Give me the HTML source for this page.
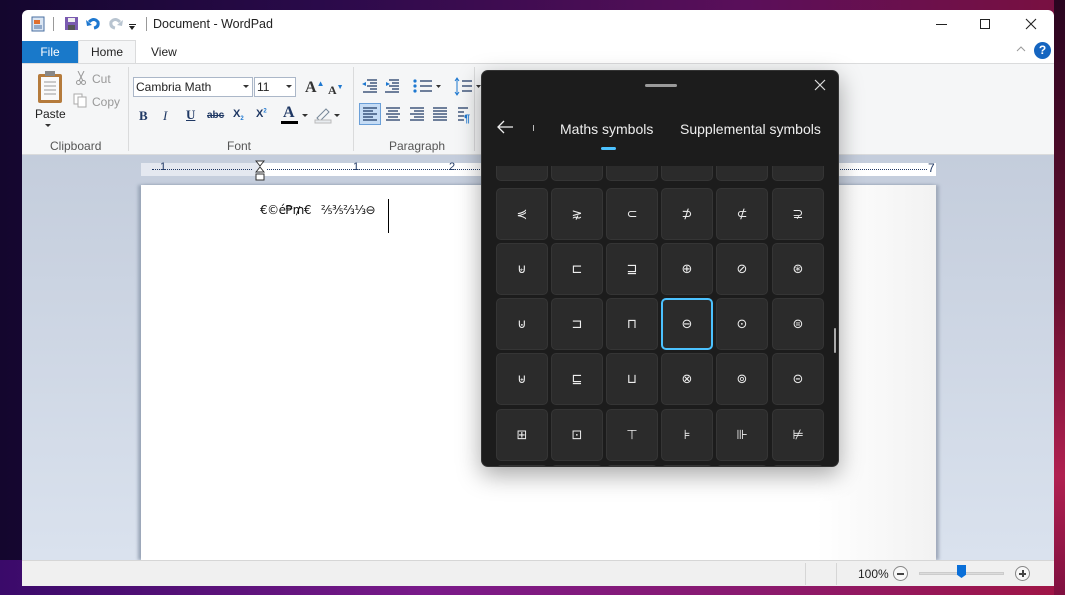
<!DOCTYPE html>
<html><head><meta charset="utf-8"><style>
*{margin:0;padding:0;box-sizing:border-box}
body{width:1065px;height:595px;overflow:hidden;position:relative;font-family:"Liberation Sans","DejaVu Sans",sans-serif;background:linear-gradient(90deg,#14062e 0%,#2a0a4a 30%,#5a0f5a 70%,#7a1040 100%)}
.bg2{position:absolute;left:0;top:560px;width:1065px;height:35px;background:linear-gradient(90deg,#3a0a6a,#7a1a8a 40%,#8a1a70 70%,#a01545)}
.bg3{position:absolute;left:1054px;top:0;width:11px;height:595px;background:linear-gradient(180deg,#2a0520,#6a1030 50%,#b02050 80%,#801040)}
.win{position:absolute;left:22px;top:10px;width:1032px;height:576px;background:#fff;overflow:hidden;border-radius:6px 6px 0 0}
.a{position:absolute}
.t{position:absolute;font-size:12px;color:#222;white-space:nowrap}
.doc{position:absolute;left:0;top:145px;width:1032px;height:405px;background:linear-gradient(180deg,#c4cddc,#dae2ee)}
.cell{position:absolute;width:52px;height:52px;background:#2b2b2b;border:1px solid #353535;border-radius:5px;color:#eee;font-family:"DejaVu Sans",sans-serif;font-size:13px;display:flex;align-items:center;justify-content:center}
</style></head><body>
<div class="bg2"></div><div class="bg3"></div>
<div class="win">
 <!-- title bar -->
 <svg class="a" style="left:8px;top:6px" width="16" height="16"><rect x="2" y="1" width="12" height="14" fill="#dbe6f3" stroke="#4a6fa0"/><rect x="4" y="4" width="6" height="4" fill="#e07030"/><path d="M4 10h8M4 12h8" stroke="#4a6fa0"/></svg>
 <div class="a" style="left:31px;top:7px;width:1px;height:14px;background:#999"></div>
 <svg class="a" style="left:42px;top:6px" width="15" height="15"><rect x="1" y="1" width="13" height="13" fill="#7a5ab0"/><rect x="4" y="2" width="7" height="4" fill="#eee"/><rect x="4" y="9" width="7" height="5" fill="#555"/></svg>
 <svg class="a" style="left:64px;top:6px" width="15" height="14"><path d="M3 6 Q8 1 12 6 Q13 11 8 12" stroke="#1e78d0" stroke-width="3" fill="none"/><path d="M0 4 L6 9 L1 10Z" fill="#1e78d0"/></svg>
 <svg class="a" style="left:86px;top:6px" width="15" height="14"><path d="M12 6 Q7 1 3 6 Q2 11 7 12" stroke="#b8c4d0" stroke-width="3" fill="none"/><path d="M15 4 L9 9 L14 10Z" fill="#b8c4d0"/></svg>
 <div class="a" style="left:107px;top:14px;width:7px;height:1px;background:#222"></div><div class="a" style="left:107px;top:16px;border:3.5px solid transparent;border-top:4px solid #222"></div>
 <div class="a" style="left:124px;top:7px;width:1px;height:14px;background:#999"></div>
 <div class="t" style="left:131px;top:7px;font-size:12.5px">Document - WordPad</div>
 <div class="a" style="left:914px;top:14px;width:11px;height:1px;background:#222"></div>
 <div class="a" style="left:958px;top:9px;width:10px;height:10px;border:1px solid #222"></div>
 <svg class="a" style="left:1003px;top:8px" width="12" height="12"><path d="M1 1L11 11M11 1L1 11" stroke="#222" stroke-width="1.1"/></svg>
 <!-- tabs -->
 <div class="a" style="left:0;top:31px;width:56px;height:22px;background:#1979ca;color:#fff;font-size:12px;text-align:center;line-height:22px">File</div>
 <div class="a" style="left:56px;top:30px;width:58px;height:24px;background:#f5f6f7;border:1px solid #dadbdc;border-bottom:none;font-size:12px;text-align:center;line-height:22px;color:#222">Home</div>
 <div class="t" style="left:129px;top:35px">View</div>
 <svg class="a" style="left:994px;top:36px" width="10" height="6"><path d="M1 5L5 1L9 5" stroke="#999" fill="none"/></svg>
 <div class="a" style="left:1012px;top:32px;width:17px;height:17px;border-radius:50%;background:#1565c0;color:#fff;font-weight:bold;font-size:12px;text-align:center;line-height:17px">?</div>
 <!-- ribbon -->
 <div class="a" style="left:0;top:53px;width:1032px;height:92px;background:#f5f6f7;border-top:1px solid #dadbdc;border-bottom:1px solid #dadbdc"></div>
 <svg class="a" style="left:14px;top:60px" width="28" height="34"><rect x="2" y="4" width="24" height="29" rx="2" fill="#b57b3c"/><rect x="5" y="7" width="18" height="23" fill="#fafafa"/><path d="M8 12h12M8 16h12M8 20h12M8 24h12" stroke="#999"/><rect x="9" y="1" width="10" height="5" fill="#888"/></svg>
 <div class="t" style="left:13px;top:97px">Paste</div>
 <div class="a" style="left:23px;top:114px;border:3px solid transparent;border-top:3px solid #333"></div>
 <svg class="a" style="left:54px;top:61px" width="10" height="14"><path d="M2 0L7 10M8 0L3 10" stroke="#999"/><circle cx="2.5" cy="11.5" r="2" fill="none" stroke="#999"/><circle cx="7.5" cy="11.5" r="2" fill="none" stroke="#999"/></svg>
 <div class="t" style="left:70px;top:62px;color:#999">Cut</div>
 <svg class="a" style="left:51px;top:83px" width="14" height="15"><rect x="1" y="1" width="8" height="10" fill="#fff" stroke="#aaa"/><rect x="5" y="4" width="8" height="10" fill="#fff" stroke="#aaa"/></svg>
 <div class="t" style="left:70px;top:85px;color:#999">Copy</div>
 <div class="t" style="left:28px;top:129px;color:#555">Clipboard</div>
 <div class="a" style="left:106px;top:57px;width:1px;height:84px;background:#dadbdc"></div>
 <div class="a" style="left:111px;top:67px;width:120px;height:20px;background:#fff;border:1px solid #abb7c8"></div>
 <div class="t" style="left:114px;top:70px">Cambria Math</div>
 <div class="a" style="left:221px;top:75px;border:3px solid transparent;border-top:3px solid #333"></div>
 <div class="a" style="left:232px;top:67px;width:42px;height:20px;background:#fff;border:1px solid #abb7c8"></div>
 <div class="t" style="left:235px;top:70px">11</div>
 <div class="a" style="left:264px;top:75px;border:3px solid transparent;border-top:3px solid #333"></div>
 <div class="t" style="left:283px;top:69px;font-family:'Liberation Serif',serif;font-size:16px;font-weight:bold;color:#333">A<span style="font-size:8px;color:#1e78d0;vertical-align:top">▲</span></div>
 <div class="t" style="left:306px;top:73px;font-family:'Liberation Serif',serif;font-size:12px;font-weight:bold;color:#333">A<span style="font-size:7px;color:#1e78d0;vertical-align:top">▼</span></div>
 <div class="t" style="left:117px;top:98px;font-family:'Liberation Serif',serif;font-weight:bold;font-size:13px;color:#1f3864">B</div>
 <div class="t" style="left:141px;top:98px;font-family:'Liberation Serif',serif;font-style:italic;font-size:13px;color:#1f3864">I</div>
 <div class="t" style="left:164px;top:97px;font-family:'Liberation Serif',serif;font-weight:bold;text-decoration:underline;font-size:13px;color:#1f3864">U</div>
 <div class="t" style="left:185px;top:100px;font-size:10px;text-decoration:line-through;color:#1f3864;font-weight:bold">abc</div>
 <div class="t" style="left:211px;top:98px;font-size:11px;font-weight:bold;color:#1f3864">X<sub style="font-size:6px;color:#1e78d0">2</sub></div>
 <div class="t" style="left:234px;top:98px;font-size:11px;font-weight:bold;color:#1f3864">X<sup style="font-size:6px;color:#1e78d0">2</sup></div>
 <div class="t" style="left:261px;top:94px;font-family:'Liberation Serif',serif;font-size:16px;font-weight:bold;color:#1f3864">A</div>
 <div class="a" style="left:259px;top:111px;width:17px;height:3px;background:#000"></div>
 <div class="a" style="left:280px;top:104px;border:3px solid transparent;border-top:3px solid #333"></div>
 <svg class="a" style="left:292px;top:96px" width="18" height="18"><path d="M3 12L12 3L15 6L6 15Z" fill="none" stroke="#789"/><rect x="1" y="14" width="16" height="3" fill="#e8ecf0" stroke="#bbb"/></svg>
 <div class="a" style="left:312px;top:104px;border:3px solid transparent;border-top:3px solid #333"></div>
 <div class="t" style="left:205px;top:129px;color:#555">Font</div>
 <div class="a" style="left:331px;top:57px;width:1px;height:84px;background:#dadbdc"></div>
 <svg class="a" style="left:337px;top:66px" width="125" height="60">
  <g stroke="#1f3864" stroke-width="1.3"><path d="M8 4h10M11 7h7M8 10h10M11 13h7M4 16h14"/><path d="M30 4h10M33 7h7M30 10h10M33 13h7M26 16h14"/><path d="M61 5h12M61 10h12M61 15h12"/><path d="M103 5h10M103 10h10M103 15h10"/></g>
  <path d="M3 8l4-2v4z" fill="#1e78d0"/><path d="M31 8l-4-2v4z" fill="#1e78d0"/>
  <circle cx="56" cy="5" r="1.6" fill="#1e78d0"/><circle cx="56" cy="10" r="1.6" fill="#1e78d0"/><circle cx="56" cy="15" r="1.6" fill="#1e78d0"/>
  <path d="M77 9h5l-2.5 3z" fill="#333"/><path d="M117 9h5l-2.5 3z" fill="#333"/>
  <path d="M98 3v15M96 5l2-3 2 3M96 16l2 3 2-3" stroke="#1e78d0" fill="none"/>
  <rect x="0.5" y="27.5" width="21" height="21" fill="#c5dcf5" stroke="#6a9fd8"/>
  <g stroke="#1f3864" stroke-width="1.2"><path d="M4 32h14M4 35h10M4 38h14M4 41h10M4 44h14"/><path d="M27 32h14M29 35h10M27 38h14M29 41h10M27 44h14"/><path d="M51 32h14M55 35h10M51 38h14M55 41h10M51 44h14"/><path d="M74 32h14M74 35h14M74 38h14M74 41h14M74 44h14"/><path d="M99 32h10M99 36h6M99 40h6M99 44h6"/></g>
  <text x="105" y="46" font-size="11" fill="#1e78d0" font-weight="bold" font-family="Liberation Sans">¶</text>
 </svg>
 <div class="t" style="left:367px;top:129px;color:#555">Paragraph</div>
 <div class="a" style="left:452px;top:57px;width:1px;height:84px;background:#dadbdc"></div>
 <!-- doc area -->
 <div class="doc"></div>
 <div class="a" style="left:119px;top:153px;width:795px;height:13px;background:#fff"></div>
 <div class="a" style="left:119px;top:153px;width:119px;height:13px;background:#e4e8f0"></div>
 <div class="t" style="left:138px;top:151px;font-size:11px;color:#1f3864">1</div>
 <div class="t" style="left:331px;top:151px;font-size:11px;color:#1f3864">1</div>
 <div class="t" style="left:427px;top:151px;font-size:11px;color:#1f3864">2</div>
 <div class="t" style="left:906px;top:151px;font-size:12px;color:#1f3864">7</div>
 <div class="a" style="left:130px;top:159px;width:100px;border-top:1px dotted #1f3864"></div>
 <div class="a" style="left:245px;top:159px;width:215px;border-top:1px dotted #1f3864"></div>
 <div class="a" style="left:815px;top:159px;width:90px;border-top:1px dotted #1f3864"></div>
 <svg class="a" style="left:233px;top:150px" width="10" height="22"><path d="M1 1h8L5 6ZM1 12h8L5 7Z" fill="#fff" stroke="#333"/><rect x="1" y="14" width="8" height="6" fill="#fff" stroke="#333"/></svg>
 <div class="a" style="left:119px;top:175px;width:795px;height:375px;background:linear-gradient(90deg,#fff 85%,#f2f2f2);box-shadow:-3px 0 3px #9aa6b8,3px 0 3px #a0aabb"></div>
 <div class="t" style="left:238px;top:193px;font-size:12px;color:#111;font-family:'DejaVu Sans',sans-serif;letter-spacing:-0.5px">€©é₱₥€ &nbsp; ⅖⅗⅔⅓⊖</div>
 <div class="a" style="left:366px;top:189px;width:1px;height:34px;background:#000"></div>
 <!-- status bar -->
 <div class="a" style="left:0;top:550px;width:1032px;height:26px;background:#f0f0f0;border-top:1px solid #d6d6d6"></div>
 <div class="a" style="left:783px;top:553px;width:1px;height:22px;background:#d6d6d6"></div>
 <div class="a" style="left:814px;top:553px;width:1px;height:22px;background:#d6d6d6"></div>
 <div class="t" style="left:836px;top:557px">100%</div>
 <div class="a" style="left:871px;top:556px;width:15px;height:15px;border-radius:50%;border:1px solid #888;background:#f8f8f8"></div><div class="a" style="left:875px;top:563px;width:7px;height:2px;background:#444"></div>
 <div class="a" style="left:897px;top:562px;width:85px;height:3px;background:#dcdcdc;border:1px solid #ccc"></div>
 <div class="a" style="left:935px;top:555px;width:9px;height:13px;background:#0a6fd8;clip-path:polygon(0 0,100% 0,100% 75%,50% 100%,0 75%)"></div>
 <div class="a" style="left:993px;top:556px;width:15px;height:15px;border-radius:50%;border:1px solid #888;background:#f8f8f8"></div><div class="a" style="left:997px;top:563px;width:7px;height:2px;background:#444"></div><div class="a" style="left:1000px;top:560px;width:2px;height:7px;background:#444"></div>
</div>
<!-- emoji/symbol picker -->
<div class="a" style="left:481px;top:70px;width:358px;height:397px;background:#1c1c1c;border-radius:7px;border:1px solid #333;overflow:hidden;box-shadow:0 8px 24px rgba(0,0,0,.35)">
 <div class="a" style="left:163px;top:13px;width:32px;height:3px;border-radius:2px;background:#9a9a9a"></div>
 <svg class="a" style="left:332px;top:8px" width="12" height="12"><path d="M1 1L11 11M11 1L1 11" stroke="#ddd" stroke-width="1.2"/></svg>
 <svg class="a" style="left:14px;top:49px" width="18" height="14"><path d="M17 7H2M8 1L2 7L8 13" stroke="#eee" stroke-width="1.3" fill="none"/></svg>
 <div class="a" style="left:51px;top:54px;width:1px;height:6px;background:#bbb"></div>
 <div class="t" style="left:78px;top:50px;font-size:14px;color:#eee">Maths symbols</div>
 <div class="a" style="left:119px;top:76px;width:15px;height:3px;border-radius:2px;background:#4cc2ff"></div>
 <div class="t" style="left:198px;top:50px;font-size:14px;color:#eee">Supplemental symbols</div>
 <div class="a" style="left:0;top:95px;width:358px;height:302px;overflow:hidden">
  <div class="cell" style="left:14px;top:-37px"></div><div class="cell" style="left:69px;top:-37px"></div><div class="cell" style="left:124px;top:-37px"></div><div class="cell" style="left:179px;top:-37px"></div><div class="cell" style="left:234px;top:-37px"></div><div class="cell" style="left:290px;top:-37px"></div>
  <div class="cell" style="left:14px;top:22px">⋞</div><div class="cell" style="left:69px;top:22px">⋧</div><div class="cell" style="left:124px;top:22px">⊂</div><div class="cell" style="left:179px;top:22px">⊅</div><div class="cell" style="left:234px;top:22px">⊄</div><div class="cell" style="left:290px;top:22px">⊋</div>
  <div class="cell" style="left:14px;top:77px">⊌</div><div class="cell" style="left:69px;top:77px">⊏</div><div class="cell" style="left:124px;top:77px">⊒</div><div class="cell" style="left:179px;top:77px">⊕</div><div class="cell" style="left:234px;top:77px">⊘</div><div class="cell" style="left:290px;top:77px">⊛</div>
  <div class="cell" style="left:14px;top:132px">⊍</div><div class="cell" style="left:69px;top:132px">⊐</div><div class="cell" style="left:124px;top:132px">⊓</div><div class="cell" style="left:179px;top:132px;border:2px solid #4cc2ff">⊖</div><div class="cell" style="left:234px;top:132px">⊙</div><div class="cell" style="left:290px;top:132px">⊜</div>
  <div class="cell" style="left:14px;top:187px">⊎</div><div class="cell" style="left:69px;top:187px">⊑</div><div class="cell" style="left:124px;top:187px">⊔</div><div class="cell" style="left:179px;top:187px">⊗</div><div class="cell" style="left:234px;top:187px">⊚</div><div class="cell" style="left:290px;top:187px">⊝</div>
  <div class="cell" style="left:14px;top:243px">⊞</div><div class="cell" style="left:69px;top:243px">⊡</div><div class="cell" style="left:124px;top:243px">⊤</div><div class="cell" style="left:179px;top:243px">⊧</div><div class="cell" style="left:234px;top:243px">⊪</div><div class="cell" style="left:290px;top:243px">⊭</div>
  <div class="cell" style="left:14px;top:299px"></div><div class="cell" style="left:69px;top:299px"></div><div class="cell" style="left:124px;top:299px"></div><div class="cell" style="left:179px;top:299px"></div><div class="cell" style="left:234px;top:299px"></div><div class="cell" style="left:290px;top:299px"></div>
 </div>
 <div class="a" style="left:352px;top:257px;width:2px;height:25px;border-radius:1px;background:#aaa"></div>
</div>
</body></html>
